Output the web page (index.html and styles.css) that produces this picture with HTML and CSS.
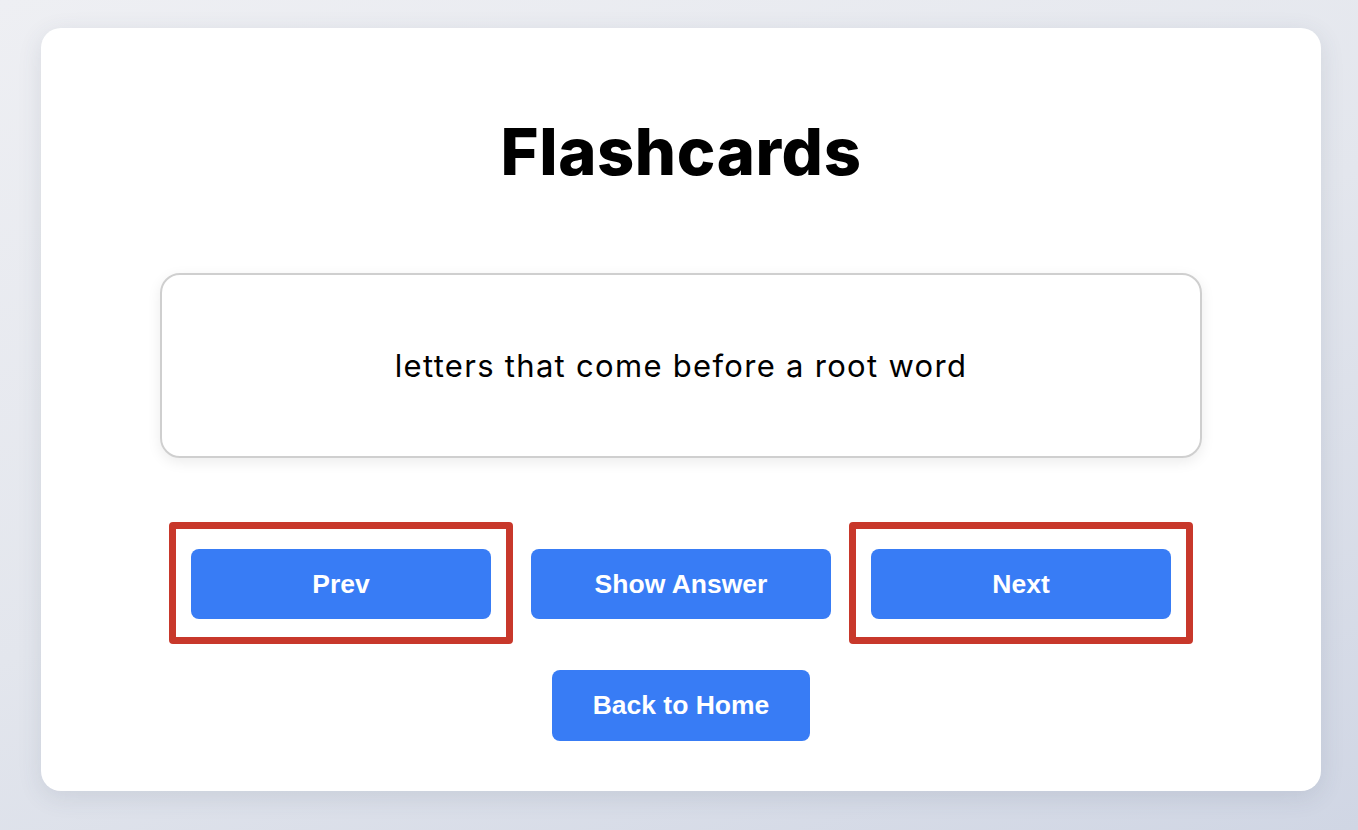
FILE: index.html
```html
<!DOCTYPE html>
<html lang="en">
<head>
<meta charset="utf-8">
<title>Flashcards</title>
<link rel="stylesheet" href="styles.css">
</head>
<body>
  <main class="panel">
    <h1 class="title">Flashcards</h1>
    <div class="card">
      <p class="card-text">letters that come before a root word</p>
    </div>
    <div class="controls">
      <button class="btn btn-marked">Prev</button>
      <button class="btn">Show Answer</button>
      <button class="btn btn-marked">Next</button>
    </div>
    <div class="home-row">
      <button class="btn btn-home">Back to Home</button>
    </div>
  </main>
</body>
</html>
```

FILE: styles.css
```css
* { box-sizing: border-box; }

html, body {
  margin: 0;
  height: 100%;
}

body {
  background: linear-gradient(160deg, #eeeff3 0%, #e3e6ed 50%, #d0d6e4 100%);
  font-family: "Inter", "Liberation Sans", sans-serif;
  overflow: hidden;
}

.panel {
  width: 1280px;
  margin: 28px 0 0 41px;
  background: #ffffff;
  border-radius: 20px;
  box-shadow: 0 6px 24px rgba(60, 70, 100, 0.12);
  padding: 84px 0 50px;
  display: flex;
  flex-direction: column;
  align-items: center;
}

.title {
  margin: 0;
  height: 80px;
  line-height: 80px;
  font-family: "Inter", sans-serif;
  font-weight: 800;
  font-size: 65px;
  letter-spacing: 0.6px;
  color: #000;
}

.card {
  margin-top: 81px;
  width: 1042px;
  height: 185px;
  border: 2px solid #cfcfcf;
  border-radius: 20px;
  box-shadow: 0 4px 14px rgba(0, 0, 0, 0.08);
  display: flex;
  align-items: center;
  justify-content: center;
}

.card-text {
  margin: 0;
  font-family: "Inter", sans-serif;
  font-weight: 400;
  font-size: 31px;
  letter-spacing: 1.3px;
  color: #000;
}

.controls {
  margin-top: 91px;
  display: flex;
  gap: 40px;
}

.btn {
  position: relative;
  width: 300px;
  height: 70px;
  border: none;
  border-radius: 8px;
  background: #387cf5;
  color: #fff;
  font-family: "Liberation Sans", Arial, sans-serif;
  font-weight: 700;
  font-size: 26.5px;
  cursor: pointer;
}

.btn-marked::after {
  content: "";
  position: absolute;
  top: -27px;
  bottom: -25px;
  left: -22px;
  right: -22px;
  border: 7px solid #c8382b;
  border-radius: 4px;
  pointer-events: none;
}

.home-row {
  margin-top: 51px;
}

.btn-home {
  width: 258px;
  height: 71px;
}
```
